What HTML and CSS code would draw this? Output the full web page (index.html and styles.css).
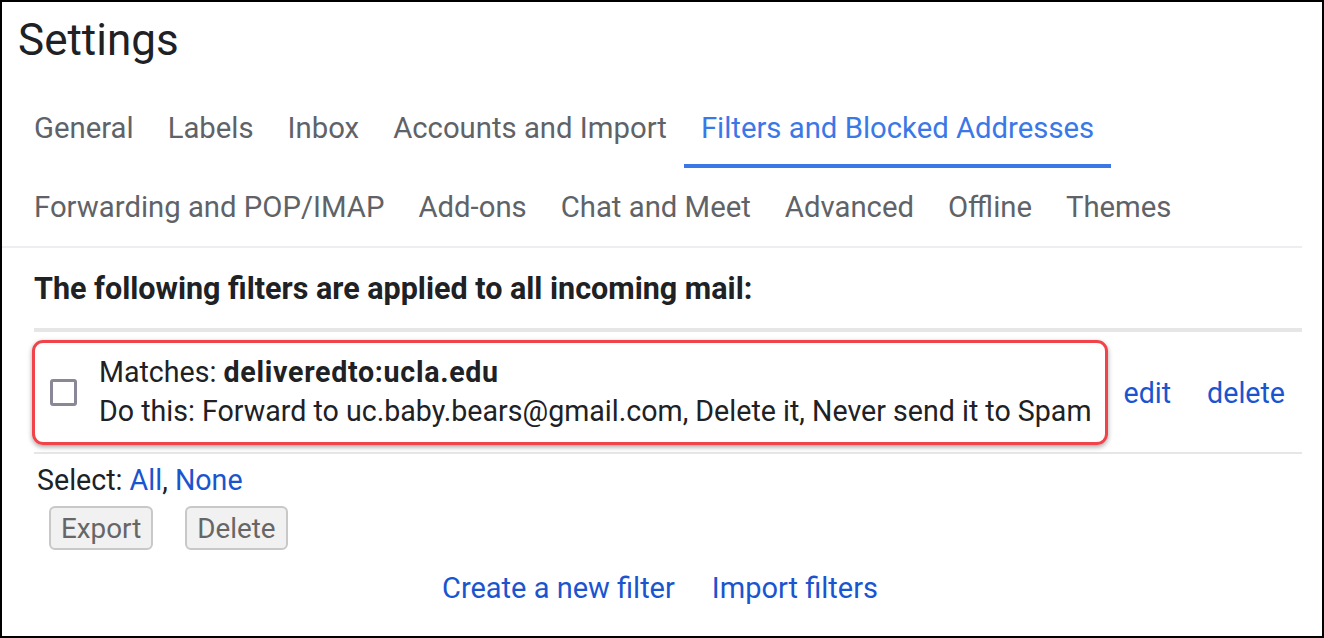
FILE: index.html
```html
<!DOCTYPE html>
<html lang="en">
<head>
<meta charset="utf-8">
<title>Settings</title>
<link rel="stylesheet" href="styles.css">
</head>
<body>
<div class="frame">
  <h1 class="title">Settings</h1>
  <nav class="tabs">
    <div class="tab-row">
      <span class="tab">General</span>
      <span class="tab">Labels</span>
      <span class="tab">Inbox</span>
      <span class="tab">Accounts and Import</span>
      <span class="tab active">Filters and Blocked Addresses</span>
    </div>
    <div class="tab-row">
      <span class="tab">Forwarding and POP/IMAP</span>
      <span class="tab">Add-ons</span>
      <span class="tab">Chat and Meet</span>
      <span class="tab">Advanced</span>
      <span class="tab">Offline</span>
      <span class="tab">Themes</span>
    </div>
  </nav>
  <section class="content">
    <h2 class="heading">The following filters are applied to all incoming mail:</h2>
    <div class="filters">
      <div class="filter-row">
        <div class="highlight">
          <span class="checkbox"></span>
          <div class="filter-text">
            <div>Matches: <b>deliveredto:ucla.edu</b></div>
            <div>Do this: Forward to uc.baby.bears@gmail.com, Delete it, Never send it to Spam</div>
          </div>
        </div>
        <div class="actions">
          <a class="link">edit</a>
          <a class="link">delete</a>
        </div>
      </div>
    </div>
    <div class="select">Select: <a class="link">All</a>, <a class="link">None</a></div>
    <div class="buttons">
      <button class="btn">Export</button>
      <button class="btn">Delete</button>
    </div>
    <div class="bottom-links">
      <a class="link">Create a new filter</a>
      <a class="link">Import filters</a>
    </div>
  </section>
</div>
</body>
</html>
```
FILE: styles.css
```css
* { box-sizing: border-box; }
html, body { margin: 0; padding: 0; background: #fff; }
body { font-family: Roboto, "Liberation Sans", Arial, sans-serif; color: #202124; }

.frame {
  width: 1324px;
  height: 638px;
  border: 2px solid #000;
  overflow: hidden;
  padding: 0 20px 0 0;
}

.title {
  margin: 0;
  padding: 13px 0 0 16px;
  height: 86px;
  font-size: 44px;
  font-weight: 400;
  line-height: 50px;
  color: #202124;
}

.tabs {
  border-bottom: 2px solid #eceef1;
  padding-left: 15px;
}
.tab-row {
  display: flex;
  height: 80px;
}
.tab-row + .tab-row { height: 78px; }
.tab {
  display: flex;
  align-items: center;
  padding: 0 17px;
  font-size: 29.3px;
  color: #5f6368;
  white-space: nowrap;
  border-bottom: 4px solid transparent;
  padding-top: 3px;
}
.tab-row + .tab-row .tab { border-bottom: 0; padding-top: 0; }
.tab.active {
  color: #3b78e7;
  border-bottom-color: #3b78e7;
}

.content {
  padding: 0 0 0 32px;
}
.heading {
  margin: 0;
  padding-top: 21px;
  font-size: 30.5px;
  font-weight: 700;
  line-height: 40px;
  color: #202124;
  white-space: nowrap;
}

.filters {
  margin-top: 19px;
  border-top: 4px solid #e6e6e6;
  border-bottom: 2px solid #e6e6e6;
  padding: 8px 0 7px;
}
.filter-row {
  display: flex;
  align-items: center;
}
.highlight {
  display: flex;
  align-items: center;
  margin-left: -2px;
  border: 3px solid #f0434a;
  border-radius: 11px;
  box-shadow: 0 2px 5px rgba(0,0,0,0.35);
  padding: 10px 13px 11px 15px;
  gap: 22px;
}
.checkbox {
  width: 27px;
  height: 27px;
  border: 3px solid #8a8897;
  border-radius: 3px;
  flex: none;
}
.filter-text {
  font-size: 28.6px;
  line-height: 39px;
  color: #202124;
  white-space: nowrap;
}
.filter-text b { font-weight: 700; letter-spacing: 0.7px; }

.actions {
  display: flex;
  gap: 36px;
  margin-left: 16px;
  font-size: 28.6px;
}

.link { color: #1a55cf; text-decoration: none; }

.select {
  margin-top: 9px;
  padding-left: 3px;
  font-size: 28.6px;
  line-height: 34px;
}
.buttons {
  display: flex;
  gap: 32px;
  margin-top: 9px;
  padding-left: 15px;
}
.btn {
  font-family: Roboto, "Liberation Sans", Arial, sans-serif;
  font-size: 27.8px;
  color: #666;
  background: #f1f1f1;
  border: 2px solid #c8c8c8;
  border-radius: 6px;
  height: 44px;
  padding: 0 10px;
}

.bottom-links {
  display: flex;
  justify-content: center;
  gap: 37px;
  margin-top: 21px;
  padding-right: 16px;
  font-size: 29px;
  line-height: 34px;
}
```
